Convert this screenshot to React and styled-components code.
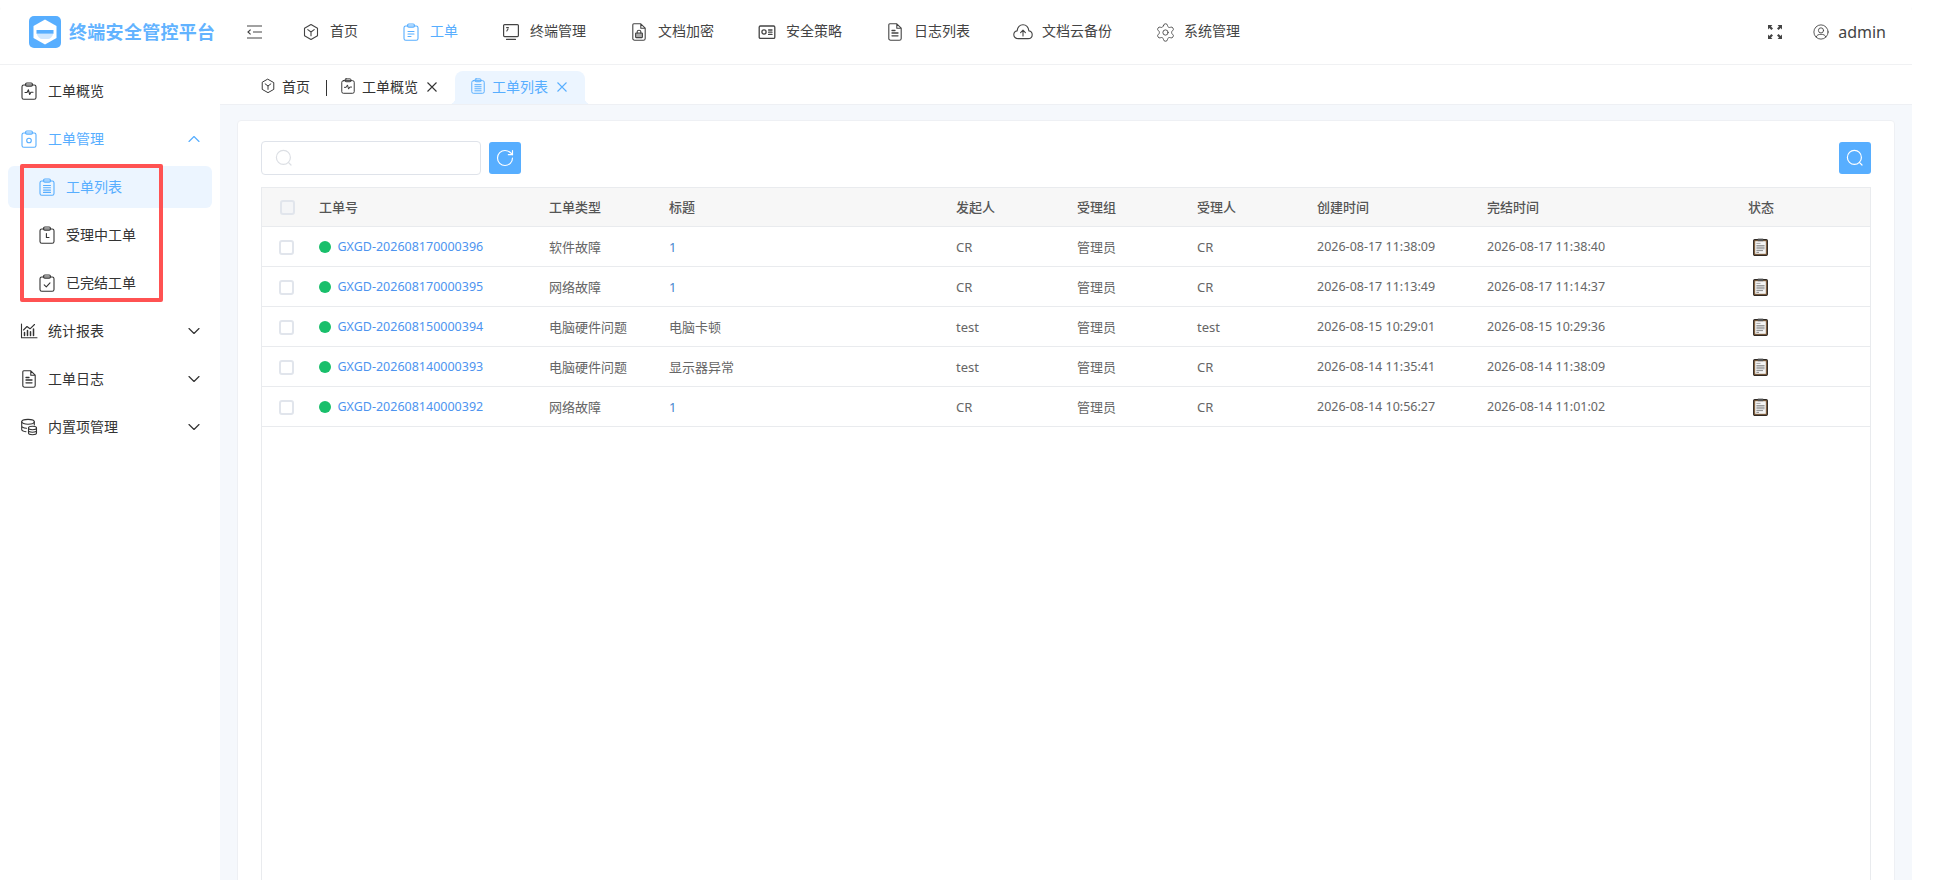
import React from 'react';
import styled, { createGlobalStyle } from 'styled-components';
import { ChevronDown, ChevronUp, RotateCw, Settings } from 'lucide-react';

const BLUE = '#57aeff';

const GlobalStyle = createGlobalStyle`
  html, body {
    margin: 0;
    padding: 0;
    background: #fff;
    height: 100%;
    overflow: hidden;
  }
  body {
    font-family: "Noto Sans", "Noto Sans CJK SC", sans-serif;
    color: #333;
  }
  * {
    box-sizing: border-box;
  }
`;

const Shell = styled.div`
  width: 1912px;
  height: 880px;
  display: flex;
  flex-direction: column;
  overflow: hidden;
  background: #fff;
  border-radius: 12px 12px 0 0;
`;

const Header = styled.header`
  height: 64px;
  flex: none;
  display: flex;
  align-items: center;
  padding-left: 29px;
  background: #fff;
  box-shadow: 0 1px 0 #f0f1f3;
  position: relative;
  z-index: 2;
`;

const LogoTitle = styled.div`
  margin-left: 8px;
  width: 146px;
  padding-bottom: 2px;
  font-size: 18px;
  font-weight: 700;
  letter-spacing: 0.3px;
  color: #62b3ff;
  white-space: nowrap;
`;

const Collapse = styled.button`
  margin-left: 32px;
  padding: 0;
  width: 15px;
  height: 14px;
  border: 0;
  background: none;
  color: #444;
  display: flex;
`;

const Nav = styled.nav`
  margin-left: 40px;
  display: flex;
  align-items: center;
  gap: 44px;
`;

const NavItem = styled.a`
  display: flex;
  align-items: center;
  gap: 10px;
  font-size: 14px;
  line-height: 18px;
  color: ${(p) => (p.$active ? BLUE : '#444')};
  white-space: nowrap;

  & > span {
    padding-bottom: 3px;
  }
`;

const NavIcon = styled.i`
  width: 18px;
  height: 18px;
  display: flex;
  align-items: center;
  justify-content: center;

  & > svg {
    flex: none;
  }
`;

const HeaderRight = styled.div`
  margin-left: auto;
  padding-right: 26px;
  display: flex;
  align-items: center;
  color: #444;
`;

const UserBox = styled.div`
  margin-left: 31px;
  display: flex;
  align-items: center;
  gap: 9px;
  font-size: 16px;
  color: #444;
`;

const Body = styled.div`
  flex: 1;
  min-height: 0;
  display: flex;
`;

const Sidebar = styled.aside`
  width: 220px;
  flex: none;
  padding-top: 3px;
  background: #fff;
  position: relative;
`;

const MenuRow = styled.div`
  height: 48px;
  padding: 0 16px 0 20px;
  display: flex;
  align-items: center;
  gap: 10px;
  font-size: 14px;
  color: ${(p) => (p.$active ? BLUE : '#333')};

  & > span {
    flex: 1;
    padding-bottom: 2px;
  }
`;

const SubList = styled.div`
  padding: 3px 8px;
  display: flex;
  flex-direction: column;
  gap: 6px;
`;

const SubRow = styled.div`
  height: 42px;
  padding-left: 30px;
  border-radius: 6px;
  display: flex;
  align-items: center;
  gap: 10px;
  font-size: 14px;
  background: ${(p) => (p.$active ? '#ecf5ff' : 'transparent')};
  color: ${(p) => (p.$active ? BLUE : '#333')};

  & > span {
    padding-bottom: 2px;
  }
`;

const Annotation = styled.div`
  position: absolute;
  left: 20px;
  top: 100px;
  width: 143px;
  height: 138px;
  border: 4px solid #ff5252;
  border-radius: 2px;
`;

const Main = styled.main`
  flex: 1;
  min-width: 0;
  display: flex;
  flex-direction: column;
  background: #f5f8fc;
`;

const TabBar = styled.div`
  height: 40px;
  flex: none;
  padding: 7px 0 0 40px;
  display: flex;
  align-items: stretch;
  background: #fff;
  box-shadow: 0 1px 0 #eef0f4;
`;

const Tab = styled.div`
  position: relative;
  display: flex;
  align-items: center;
  gap: 6px;
  height: 33px;
  padding: ${(p) => (p.$active ? '0 18px 4px 15px' : '0 0 4px')};
  font-size: 14px;
  border-radius: 8px 8px 0 0;
  background: ${(p) => (p.$active ? '#ecf5ff' : 'transparent')};
  color: ${(p) => (p.$active ? BLUE : '#333')};
  margin-right: ${(p) => p.$gap || 0}px;

  ${(p) => p.$active && `
    &::before, &::after {
      content: '';
      position: absolute;
      bottom: 0;
      width: 6px;
      height: 6px;
    }
    &::before {
      left: -6px;
      background: radial-gradient(circle at 0 0, transparent 6px, #ecf5ff 6.5px);
    }
    &::after {
      right: -6px;
      background: radial-gradient(circle at 100% 0, transparent 6px, #ecf5ff 6.5px);
    }
  `}
`;

const TabClose = styled.svg`
  width: 10px;
  height: 10px;
  margin: 3px 0 0 3px;
  stroke: currentColor;
  stroke-width: 1.1;
  fill: none;
`;

const TabDivider = styled.i`
  width: 1px;
  height: 16px;
  margin: 9px 13px 0 16px;
  background: #333;
`;

const Content = styled.div`
  padding: 16px 17px 0;
`;

const Card = styled.section`
  min-height: 820px;
  padding: 20px 23px 0;
  background: #fff;
  border: 1px solid #eef0f4;
  border-radius: 4px;
`;

const Toolbar = styled.div`
  display: flex;
  align-items: center;
  gap: 8px;
  margin-bottom: 12px;
`;

const SearchBox = styled.div`
  width: 220px;
  height: 34px;
  padding-left: 13px;
  display: flex;
  align-items: center;
  border: 1px solid #dfe3ea;
  border-radius: 4px;
  color: #dcdfe4;
`;

const SquareButton = styled.button`
  width: 32px;
  height: 32px;
  padding: 0;
  border: 0;
  border-radius: 3px;
  display: flex;
  align-items: center;
  justify-content: center;
  color: #fff;
  background: ${BLUE};
  margin-left: ${(p) => (p.$push ? 'auto' : '0')};
`;

const Table = styled.div`
  min-height: 780px;
  border: 1px solid #e9ebee;
  border-bottom: 0;
  font-size: 13px;
`;

const Row = styled.div`
  height: ${(p) => (p.$head ? '39px' : '40px')};
  display: grid;
  grid-template-columns: 47px 230px 120px 287px 121px 120px 120px 170px 261px 1fr;
  align-items: center;
  border-bottom: 1px solid #e9ebee;
  background: ${(p) => (p.$head ? '#f7f7f7' : '#fff')};
  color: ${(p) => (p.$head ? '#555' : '#666')};
  font-weight: ${(p) => (p.$head ? 500 : 400)};
`;

const Cell = styled.div`
  padding-left: 10px;
  padding-bottom: ${(p) => (p.$head ? '2px' : '0')};
  white-space: nowrap;
  display: flex;
  align-items: center;
  font-size: ${(p) => (p.$latin ? '12.5px' : '13px')};
`;

const CheckCell = styled.div`
  padding-left: ${(p) => (p.$head ? '18px' : '17px')};
  padding-top: ${(p) => (p.$head ? '0' : '1px')};
  display: flex;
`;

const Check = styled.span`
  width: 15px;
  height: 15px;
  border: 2px solid #e1e5ec;
  border-radius: 3px;
  background: ${(p) => (p.$head ? '#f4f5f7' : '#fff')};
`;

const Dot = styled.i`
  width: 12px;
  height: 12px;
  margin-right: 6.5px;
  border-radius: 50%;
  background: #19bf6b;
`;

const IdLink = styled.a`
  color: #4d94ef;
  font-size: 12.5px;
`;

const TitleLink = styled.a`
  color: ${(p) => (p.$plain ? '#666' : '#4a86cf')};
`;

const StatusCell = styled.div`
  padding-left: 15px;
  display: flex;
`;

// svg icons, everything is drawn on a 18 box unless said otherwise
const Svg = ({ size = 18, children, sw = 1.1, ...rest }) => (
  <svg
    width={size}
    height={size}
    viewBox="0 0 18 18"
    fill="none"
    stroke="currentColor"
    strokeWidth={sw}
    strokeLinecap="round"
    strokeLinejoin="round"
    {...rest}
  >
    {children}
  </svg>
);

const Logo = () => (
  <svg width="32" height="32" viewBox="0 0 32 32">
    <rect width="32" height="32" rx="5" fill={BLUE} />
    <path d="M16 3.5 L27.5 10 V22 L16 28.5 L4.5 22 V10 Z" fill="#fff" />
    <path d="M7.5 17 C8.5 21 11 23 13 23 H19 C21 23 23.5 21 24.5 17 Z" fill="#cfe7ff" />
    <rect x="7.5" y="14" width="17" height="3.6" fill={BLUE} />
  </svg>
);

const Cube = ({ size }) => (
  <Svg size={size}>
    <path d="M9 1.5 L15.5 5.2 V12.8 L9 16.5 L2.5 12.8 V5.2 Z" />
    <path d="M5.8 6.6 L9 9 L12.2 6.6 M9 9 V12.8" />
  </Svg>
);

const clipInner = {
  lines: <path d="M6 8.5 H12 M6 11 H12 M6 13.5 H9" />,
  list: <path d="M5.5 7.5 H12.5 M5.5 9.8 H12.5 M5.5 12.1 H12.5 M5.5 14.4 H12.5" />,
  pulse: <path d="M5 10.5 H7 L8.4 7.8 L9.7 12.5 L10.9 10.2 H13" />,
  circle: <circle cx="9" cy="10.5" r="2.3" />,
  clock: <path d="M8.4 7.5 V11.5 H11" />,
  check: <path d="M6.2 10.8 L8.3 12.8 L12 8.8" />,
};

const Clip = ({ kind, size }) => (
  <Svg size={size}>
    <rect x="2" y="3" width="14" height="14.2" rx="1.8" />
    <rect x="5.6" y="1" width="6.8" height="3.2" rx="1.2" />
    {clipInner[kind]}
  </Svg>
);

const Monitor = () => (
  <Svg>
    <rect x="1.6" y="1.6" width="14.8" height="12" rx="1" strokeWidth="1.2" />
    <path d="M4.5 16.4 H13.5 M4.6 4.6 H6.4 M6 6 L4.8 8" />
  </Svg>
);

const DocPath = 'M3.8 0.8 H10.8 L15.2 5.2 V15.4 C15.2 16.4 14.5 17.2 13.4 17.2 H4.6 C3.5 17.2 2.8 16.4 2.8 15.4 V1.8 C2.8 1.2 3.2 0.8 3.8 0.8 Z M10.8 0.8 V5.2 H15.2';

const DocLock = () => (
  <Svg>
    <path d={DocPath} />
    <rect x="5.6" y="10" width="6.8" height="4.6" rx="0.6" fill="#aaa" />
    <path d="M7.2 10 V8.4 C7.2 6.8 10.8 6.8 10.8 8.4 V10" />
  </Svg>
);

const DocList = ({ size }) => (
  <Svg size={size}>
    <path d={DocPath} />
    <path d="M6 7.5 H9 M6 10 H12 M6 12.8 H12" strokeWidth="1.3" />
  </Svg>
);

const IdCard = () => (
  <Svg sw="1.3">
    <rect x="1.2" y="3" width="15.6" height="12.4" rx="1.2" />
    <circle cx="6" cy="9" r="2.1" />
    <path d="M10.6 7 H14 M10.6 9.2 H14 M10.6 11.4 H14" />
  </Svg>
);

const Cloud = () => (
  <svg width="20" height="18" viewBox="0 0 20 18" fill="none" stroke="currentColor" strokeWidth="1.1" strokeLinecap="round" strokeLinejoin="round">
    <path d="M5 15.6 C2.6 15.6 0.8 13.9 0.8 11.7 C0.8 9.8 2.2 8.2 4.1 7.9 C4.6 4.4 7 1.8 10 1.8 C13 1.8 15.4 4.4 15.9 7.9 C17.8 8.2 19.2 9.8 19.2 11.7 C19.2 13.9 17.4 15.6 15 15.6 Z" />
    <path d="M10 13 V7.4 M7.6 9.6 L10 7.2 L12.4 9.6" />
  </svg>
);

const Chart = () => (
  <Svg>
    <path d="M1.5 2 V15.8 H17" />
    <path d="M4.5 13.5 V10.5 M7.5 13.5 V8.5 M10.5 13.5 V9.8 M13.5 13.5 V7" strokeWidth="1.5" />
    <path d="M3.5 8 L7 4.5 L10 6.8 L14.5 2.5" />
  </Svg>
);

const Database = () => (
  <Svg>
    <ellipse cx="8" cy="3.8" rx="6.3" ry="2.4" />
    <path d="M1.7 3.8 V11.5 C1.7 12.6 3.5 13.4 6 13.7 M14.3 3.8 V7 M1.7 8 C1.7 9.2 3.8 10 6.5 10.2" />
    <ellipse cx="12.5" cy="10" rx="4" ry="1.7" />
    <path d="M8.5 10 V15 C8.5 16 10.4 16.7 12.5 16.7 C14.6 16.7 16.5 16 16.5 15 V10 M8.5 12.6 C8.5 13.6 10.4 14.3 12.5 14.3 C14.6 14.3 16.5 13.6 16.5 12.6" />
  </Svg>
);

const Fullscreen = () => (
  <svg width="14" height="14" viewBox="0 0 14 14" fill="currentColor">
    <path d="M0 0 H4.4 L3 1.4 L5 3.4 L3.4 5 L1.4 3 L0 4.4 Z" />
    <path d="M14 0 H9.6 L11 1.4 L9 3.4 L10.6 5 L12.6 3 L14 4.4 Z" />
    <path d="M0 14 H4.4 L3 12.6 L5 10.6 L3.4 9 L1.4 11 L0 9.6 Z" />
    <path d="M14 14 H9.6 L11 12.6 L9 10.6 L10.6 9 L12.6 11 L14 9.6 Z" />
  </svg>
);

const User = () => (
  <Svg size={16} sw="1">
    <circle cx="9" cy="9" r="8" />
    <circle cx="9" cy="7.2" r="2.9" />
    <path d="M3.6 14.6 C4.2 12.4 6.2 11.6 9 11.6 C11.8 11.6 13.8 12.4 14.4 14.6" />
  </Svg>
);

const SearchGlass = ({ size = 18 }) => (
  <Svg size={size} sw="1.2">
    <circle cx="8.4" cy="8.4" r="7" />
    <path d="M13.6 13.6 L16 16" />
  </Svg>
);

const StatusIcon = () => (
  <svg width="15" height="18" viewBox="0 0 15 18">
    <rect x="0.6" y="1.6" width="13.8" height="15.8" rx="1.2" fill="#8f6a45" stroke="#2e2824" strokeWidth="1.1" />
    <rect x="2.2" y="3.2" width="10.6" height="12.6" fill="#f4f4f4" />
    <rect x="4.8" y="0.6" width="5.4" height="2.6" fill="#555" />
    <path d="M3.4 5.4 H7.5" stroke="#a8a8a8" strokeWidth="1" />
    <path d="M3.4 7.6 H11.6 M3.4 9.2 H11.6 M3.4 10.8 H11.6" stroke="#999" strokeWidth="1.1" />
    <path d="M3.4 12.6 H10 M3.4 14.4 H6" stroke="#808080" strokeWidth="0.9" />
  </svg>
);

const navItems = [
  { label: '首页', icon: <Cube /> },
  { label: '工单', icon: <Clip kind="lines" />, active: true },
  { label: '终端管理', icon: <Monitor /> },
  { label: '文档加密', icon: <DocLock /> },
  { label: '安全策略', icon: <IdCard /> },
  { label: '日志列表', icon: <DocList /> },
  { label: '文档云备份', icon: <Cloud /> },
  { label: '系统管理', icon: <Settings size={21} strokeWidth={1} /> },
];

const columns = ['工单号', '工单类型', '标题', '发起人', '受理组', '受理人', '创建时间', '完结时间'];

const orders = [
  { id: 'GXGD-202608170000396', type: '软件故障', title: '1', from: 'CR', group: '管理员', owner: 'CR', created: '2026-08-17 11:38:09', closed: '2026-08-17 11:38:40' },
  { id: 'GXGD-202608170000395', type: '网络故障', title: '1', from: 'CR', group: '管理员', owner: 'CR', created: '2026-08-17 11:13:49', closed: '2026-08-17 11:14:37' },
  { id: 'GXGD-202608150000394', type: '电脑硬件问题', title: '电脑卡顿', from: 'test', group: '管理员', owner: 'test', created: '2026-08-15 10:29:01', closed: '2026-08-15 10:29:36' },
  { id: 'GXGD-202608140000393', type: '电脑硬件问题', title: '显示器异常', from: 'test', group: '管理员', owner: 'CR', created: '2026-08-14 11:35:41', closed: '2026-08-14 11:38:09' },
  { id: 'GXGD-202608140000392', type: '网络故障', title: '1', from: 'CR', group: '管理员', owner: 'CR', created: '2026-08-14 10:56:27', closed: '2026-08-14 11:01:02' },
];

const closeIcon = (
  <TabClose viewBox="0 0 10 10">
    <path d="M0.5 0.5 L9.5 9.5 M9.5 0.5 L0.5 9.5" />
  </TabClose>
);

const App = () => (
  <Shell>
    <GlobalStyle />
    <Header>
      <Logo />
      <LogoTitle>终端安全管控平台</LogoTitle>
      <Collapse>
        <svg width="15" height="14" viewBox="0 0 15 14" fill="none" stroke="currentColor" strokeWidth="1.2">
          <path d="M0 1 H15 M0 13 H15 M6 7 H15 M3.6 4.6 L1 7 L3.6 9.4" />
        </svg>
      </Collapse>
      <Nav>
        {navItems.map((item) => (
          <NavItem key={item.label} $active={item.active}>
            <NavIcon>{item.icon}</NavIcon>
            <span>{item.label}</span>
          </NavItem>
        ))}
      </Nav>
      <HeaderRight>
        <Fullscreen />
        <UserBox>
          <User />
          admin
        </UserBox>
      </HeaderRight>
    </Header>
    <Body>
      <Sidebar>
        <MenuRow>
          <Clip kind="pulse" />
          <span>工单概览</span>
        </MenuRow>
        <MenuRow $active>
          <Clip kind="circle" />
          <span>工单管理</span>
          <ChevronUp size={20} strokeWidth={1.4} />
        </MenuRow>
        <SubList>
          <SubRow $active>
            <Clip kind="list" />
            <span>工单列表</span>
          </SubRow>
          <SubRow>
            <Clip kind="clock" />
            <span>受理中工单</span>
          </SubRow>
          <SubRow>
            <Clip kind="check" />
            <span>已完结工单</span>
          </SubRow>
        </SubList>
        <MenuRow>
          <Chart />
          <span>统计报表</span>
          <ChevronDown size={20} strokeWidth={1.4} />
        </MenuRow>
        <MenuRow>
          <DocList />
          <span>工单日志</span>
          <ChevronDown size={20} strokeWidth={1.4} />
        </MenuRow>
        <MenuRow>
          <Database />
          <span>内置项管理</span>
          <ChevronDown size={20} strokeWidth={1.4} />
        </MenuRow>
        <Annotation />
      </Sidebar>
      <Main>
        <TabBar>
          <Tab>
            <Cube size={16} />
            首页
          </Tab>
          <TabDivider />
          <Tab $gap={18}>
            <Clip kind="pulse" size={16} />
            工单概览
            {closeIcon}
          </Tab>
          <Tab $active>
            <Clip kind="list" size={16} />
            工单列表
            {closeIcon}
          </Tab>
        </TabBar>
        <Content>
          <Card>
            <Toolbar>
              <SearchBox>
                <SearchGlass />
              </SearchBox>
              <SquareButton>
                <RotateCw size={20} strokeWidth={1.4} />
              </SquareButton>
              <SquareButton $push>
                <SearchGlass />
              </SquareButton>
            </Toolbar>
            <Table>
              <Row $head>
                <CheckCell $head><Check $head /></CheckCell>
                {columns.map((c) => <Cell key={c} $head>{c}</Cell>)}
                <Cell $head>状态</Cell>
              </Row>
              {orders.map((o) => (
                <Row key={o.id}>
                  <CheckCell><Check /></CheckCell>
                  <Cell>
                    <Dot />
                    <IdLink>{o.id}</IdLink>
                  </Cell>
                  <Cell>{o.type}</Cell>
                  <Cell><TitleLink $plain={o.title !== '1'}>{o.title}</TitleLink></Cell>
                  <Cell>{o.from}</Cell>
                  <Cell>{o.group}</Cell>
                  <Cell>{o.owner}</Cell>
                  <Cell $latin>{o.created}</Cell>
                  <Cell $latin>{o.closed}</Cell>
                  <StatusCell><StatusIcon /></StatusCell>
                </Row>
              ))}
            </Table>
          </Card>
        </Content>
      </Main>
    </Body>
  </Shell>
);

export default App;
